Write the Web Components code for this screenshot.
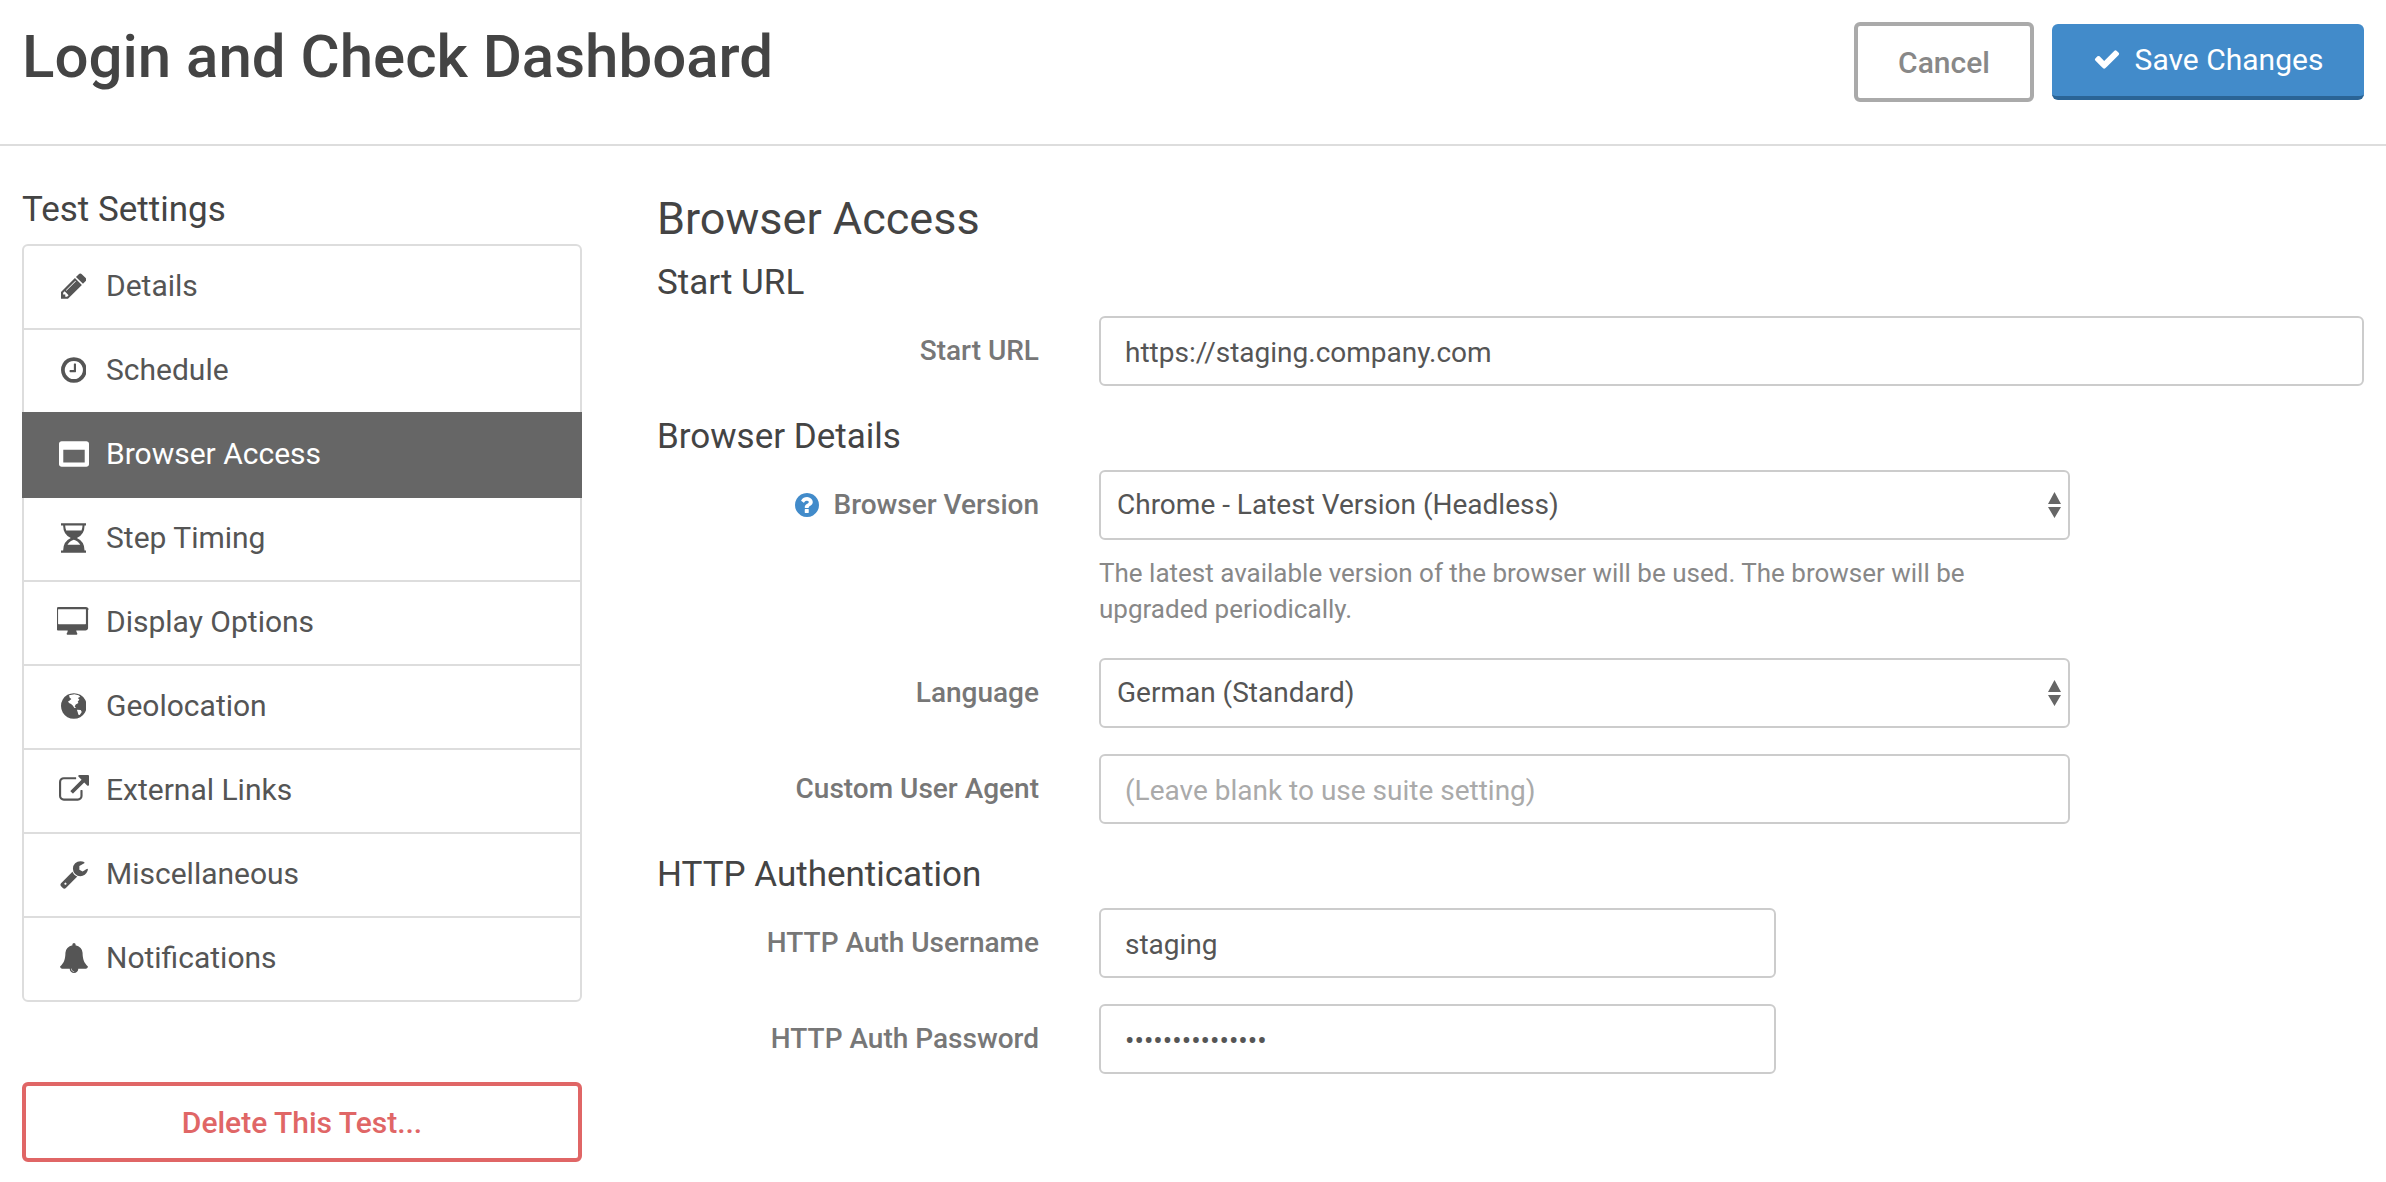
<!DOCTYPE html>
<html><head><meta charset="utf-8"><style>
html,body{margin:0;background:#fff;font-family:Roboto,"Liberation Sans",sans-serif;color:#444}
</style></head><body>
<app-page>
  <page-header slot="header" title-text="Login and Check Dashboard">
    <ui-button kind="cancel">Cancel</ui-button>
    <ui-button kind="save" icon="check">Save Changes</ui-button>
  </page-header>
  <settings-nav slot="nav">
    <nav-item icon="pencil">Details</nav-item>
    <nav-item icon="clock">Schedule</nav-item>
    <nav-item icon="window" active>Browser Access</nav-item>
    <nav-item icon="hourglass">Step Timing</nav-item>
    <nav-item icon="desktop">Display Options</nav-item>
    <nav-item icon="globe">Geolocation</nav-item>
    <nav-item icon="external">External Links</nav-item>
    <nav-item icon="wrench">Miscellaneous</nav-item>
    <nav-item icon="bell" last>Notifications</nav-item>
  </settings-nav>
  <section-title level="1">Browser Access</section-title>
  <section-title level="2" style="margin-top:14px">Start URL</section-title>
  <form-row label="Start URL" width="1265" style="margin-top:11px"><field-box kind="input">https://staging.company.com</field-box></form-row>
  <section-title level="2" style="margin-top:29px">Browser Details</section-title>
  <form-row label="Browser Version" help width="971" style="margin-top:11px">
    <field-box kind="select">Chrome - Latest Version (Headless)</field-box>
    <help-text slot="help">The latest available version of the browser will be used. The browser will be upgraded periodically.</help-text>
  </form-row>
  <form-row label="Language" width="971" style="margin-top:31px"><field-box kind="select">German (Standard)</field-box></form-row>
  <form-row label="Custom User Agent" width="971" style="margin-top:26px"><field-box kind="input" placeholder>(Leave blank to use suite setting)</field-box></form-row>
  <section-title level="2" style="margin-top:29px">HTTP Authentication</section-title>
  <form-row label="HTTP Auth Username" width="677" style="margin-top:11px"><field-box kind="input">staging</field-box></form-row>
  <form-row label="HTTP Auth Password" width="677" style="margin-top:26px"><field-box kind="input" password>•••••••••••••••</field-box></form-row>
</app-page>
<script>
const ICONS={
 check:['0 0 1792 1792','M1671 566q0 40-28 68l-724 724-136 136q-28 28-68 28t-68-28l-136-136-362-362q-28-28-28-68t28-68l136-136q28-28 68-28t68 28l294 295 656-657q28-28 68-28t68 28l136 136q28 28 28 68z'],
 question:['0 0 1536 1792','M880 1376v-192q0-14-9-23t-23-9h-192q-14 0-23 9t-9 23v192q0 14 9 23t23 9h192q14 0 23-9t9-23zm256-672q0-88-55.5-163t-138.5-116-170-41q-243 0-371 213-15 24 8 42l132 100q7 6 19 6 16 0 25-12 53-68 86-92 34-24 86-24 48 0 85.5 26t37.5 59q0 38-20 61t-68 45q-63 28-115.5 86.5t-52.5 125.5v36q0 14 9 23t23 9h192q14 0 23-9t9-23q0-19 21.5-49.5t54.5-49.5q32-18 49-28.5t46-35 44.5-48 28-60.5 12.5-81zm400 192q0 209-103 385.5t-279.5 279.5-385.5 103-385.5-103-279.5-279.5-103-385.5 103-385.5 279.5-279.5 385.5-103 385.5 103 279.5 279.5 103 385.5z'],
 pencil:['0 0 1536 1792','M363 1536l91-91-235-235-91 91v107h128v128h107zm523-928q0-22-22-22-10 0-17 7l-542 542q-7 7-7 17 0 22 22 22 10 0 17-7l542-542q7-7 7-17zm-54-192l416 416-832 832h-416v-416zm683 96q0 53-37 90l-166 166-416-416 166-165q36-38 90-38 53 0 91 38l235 234q37 39 37 91z'],
 clock:['0 0 1536 1792','M896 544v448q0 14-9 23t-23 9h-320q-14 0-23-9t-9-23v-64q0-14 9-23t23-9h224v-352q0-14 9-23t23-9h64q14 0 23 9t9 23zm416 352q0-148-73-273t-198-198-273-73-273 73-198 198-73 273 73 273 198 198 273 73 273-73 198-198 73-273zm224 0q0 209-103 385.5t-279.5 279.5-385.5 103-385.5-103-279.5-279.5-103-385.5 103-385.5 279.5-279.5 385.5-103 385.5 103 279.5 279.5 103 385.5z'],
 window:['0 0 1792 1792','M256 1408h1280v-768h-1280v768zm1536-1120v1216q0 66-47 113t-113 47h-1472q-66 0-113-47t-47-113v-1216q0-66 47-113t113-47h1472q66 0 113 47t47 113z'],
 hourglass:['0 0 1536 1792','M0 10H1536V150H1408Q1408 690 950 896Q1408 1102 1408 1642H1536V1782H0V1642H128Q128 1102 586 896Q128 690 128 150H0ZM250 150Q256 300 310 450H1226Q1280 300 1286 150ZM768 1000Q1010 1060 1150 1300H386Q526 1060 768 1000Z'],
 desktop:['0 0 1920 1792','M1728 992v-832q0-13-9.5-22.5t-22.5-9.5h-1600q-13 0-22.5 9.5t-9.5 22.5v832q0 13 9.5 22.5t22.5 9.5h1600q13 0 22.5-9.5t9.5-22.5zm128-832v1088q0 66-47 113t-113 47h-544q0 37 16 77.5t32 71 16 43.5q0 26-19 45t-45 19h-512q-26 0-45-19t-19-45q0-14 16-44t32-70 16-78h-544q-66 0-113-47t-47-113v-1088q0-66 47-113t113-47h1632q66 0 113 47t47 113z'],
 globe:['0 0 1536 1792','M768 128a768 768 0 1 0 0.01 0ZM480 260L800 190L1050 260L1150 340L1010 420L1100 520L1000 620L1040 720L880 800L820 920L900 1000L800 1010L700 860L600 770L480 720L420 620L520 560L620 480L520 400ZM950 1120L1180 1130L1240 1250L1120 1430L1040 1420L1000 1270Z'],
 external:['0 0 1792 1792','M1408 928v320q0 119-84.5 203.5t-203.5 84.5h-832q-119 0-203.5-84.5t-84.5-203.5v-832q0-119 84.5-203.5t203.5-84.5h704q14 0 23 9t9 23v64q0 14-9 23t-23 9h-704q-66 0-113 47t-47 113v832q0 66 47 113t113 47h832q66 0 113-47t47-113v-320q0-14 9-23t23-9h64q14 0 23 9t9 23zm384-864v512q0 26-19 45t-45 19-45-19l-176-176-652 652q-10 10-23 10t-23-10l-114-114q-10-10-10-23t10-23l652-652-176-176q-19-19-19-45t19-45 45-19h512q26 0 45 19t19 45z'],
 wrench:['0 0 1792 1792','M448 1472q0-26-19-45t-45-19-45 19-19 45 19 45 45 19 45-19 19-45zm644-420l-682 682q-37 37-90 37-52 0-91-37l-106-108q-38-36-38-90 0-53 38-91l681-681q39 98 114.5 173.5t173.5 114.5zm634-435q0 39-23 106-47 134-164.5 217.5t-258.5 83.5q-185 0-316.5-131.5t-131.5-316.5 131.5-316.5 316.5-131.5q58 0 121.5 16.5t107.5 46.5q16 11 16 28t-16 28l-293 169v224l193 107q5-3 79-48.5t135.5-81 70.5-35.5q15 0 23.5 10t8.5 25z'],
 bell:['0 0 1792 1792','M912 1696q0-16-16-16-59 0-101.5-42.5t-42.5-101.5q0-16-16-16t-16 16q0 73 51.5 124.5t124.5 51.5q16 0 16-16zm816-288q0 52-38 90t-90 38h-448q0 106-75 181t-181 75-181-75-75-181h-448q-52 0-90-38t-38-90q50-42 91-88t85-119.5 74.5-158.5 50-206 19.5-260q0-152 117-282.5t307-158.5q-8-19-8-39 0-40 28-68t68-28 68 28 28 68q0 20-8 39 190 28 307 158.5t117 282.5q0 139 19.5 260t50 206 74.5 158.5 85 119.5 91 88z']
};
function svg(name,h){const [vb,d]=ICONS[name];const p=vb.split(' ');const w=h*p[2]/p[3];
 return `<svg part="icon" width="${w}" height="${h}" viewBox="${vb}" fill="currentColor" fill-rule="evenodd" aria-hidden="true"><path d="${d}"/></svg>`;}
function def(tag,html){customElements.define(tag,class extends HTMLElement{
  constructor(){super();this.attachShadow({mode:'open'});}
  connectedCallback(){this.shadowRoot.innerHTML=typeof html==='function'?html(this):html;}
});}
def('app-page',`<style>:host{display:block;width:2386px;height:1182px;overflow:hidden;box-sizing:border-box}
.body{display:grid;grid-template-columns:560px 1fr;column-gap:75px;padding:0 22px}
.main{padding-top:45px;display:block}
.side{padding-top:42px}
</style><slot name="header"></slot><div class="body"><div class="side"><slot name="nav"></slot></div><div class="main"><slot></slot></div></div>`);
def('page-header',h=>`<style>:host{display:flex;height:144px;border-bottom:2px solid #ddd;padding:0 22px;justify-content:space-between;align-items:flex-start}
h1{margin:0;padding-top:21px;font:500 60px/72px Roboto,sans-serif;color:#444;letter-spacing:0}
.b{display:flex;gap:18px;padding-top:22px;align-items:center}</style><h1>${h.getAttribute('title-text')}</h1><div class="b"><slot></slot></div>`);
def('ui-button',h=>{const k=h.getAttribute('kind');const ic=h.getAttribute('icon');
 const s={cancel:`width:180px;height:80px;border:4px solid #aaa;color:#888;font-weight:500;padding-bottom:0`,
  save:`width:312px;height:76px;background:#428bca;border-bottom:4px solid #2a6496;color:#fff;font-weight:400;gap:14px;padding-bottom:2px`,
  danger:`width:560px;height:80px;border:4px solid #e06666;color:#e06666;font-weight:500`}[k];
 return `<style>:host{display:block}.btn{box-sizing:border-box;display:flex;align-items:center;justify-content:center;border-radius:6px;font-family:Roboto,sans-serif;font-size:30px;${s}}</style><div class="btn">${ic?svg(ic,28):''}<slot></slot></div>`;});
def('settings-nav',`<style>:host{display:block;width:560px;font-family:Roboto,sans-serif}
h3{margin:0 0 12px;font:400 35px/44px Roboto,sans-serif;color:#444}
.list{border:2px solid #ddd;border-radius:6px}
.del{margin-top:80px}</style><h3>Test Settings</h3><div class="list"><slot></slot></div><div class="del"><ui-button kind="danger">Delete This Test...</ui-button></div>`);
def('nav-item',h=>{const a=h.hasAttribute('active');const last=h.hasAttribute('last');
 return `<style>:host{display:flex;box-sizing:border-box;height:${last?82:84}px;align-items:center;padding-left:32px;padding-bottom:2px;border-bottom:${last?0:2}px solid #ddd;color:#555;font:400 30px/36px Roboto,sans-serif;${a?'background:#666;color:#fff;margin:-2px -2px 0;height:86px;width:auto;padding-left:34px;border-bottom:0;':''}}
.i{width:35px;margin-right:15px;display:flex;justify-content:center;align-items:center;flex:none}</style><span class="i">${svg(h.getAttribute('icon'),30)}</span><slot></slot>`;});
def('section-title',h=>{const l=h.getAttribute('level');return `<style>:host{display:block;color:#444;font-family:Roboto,sans-serif;font-weight:400;${l==1?'font-size:45px;line-height:56px':'font-size:35px;line-height:44px'}}</style><slot></slot>`});
def('form-row',h=>{const w=h.getAttribute('width');return `<style>:host{display:grid;grid-template-columns:382px ${w}px;column-gap:60px;align-items:start}
.l{height:70px;display:flex;align-items:center;justify-content:flex-end;gap:14px;color:#777;font:500 28px/36px Roboto,sans-serif;box-sizing:border-box}
.l svg{color:#428bca}
</style><div class="l">${h.hasAttribute('help')?svg('question',28):''}<span>${h.getAttribute('label')}</span></div><div><slot></slot><slot name="help"></slot></div>`});
def('help-text',`<style>:host{display:block;width:900px;margin-top:15px;color:#888;font:400 26px/36px Roboto,sans-serif}</style><slot></slot>`);
def('field-box',h=>{const sel=h.getAttribute('kind')==='select';const ph=h.hasAttribute('placeholder');
 return `<style>:host{display:flex;box-sizing:border-box;height:70px;align-items:center;border:2px solid #ccc;border-radius:6px;background:#fff;padding:${sel?0:3}px ${sel?16:24}px 0;color:${ph?'#aaa':'#555'};font:400 28px/36px Roboto,sans-serif;justify-content:space-between}
svg{flex:none;margin-right:-9px;display:block}</style><span><slot></slot></span>${sel?'<svg width="13" height="26" viewBox="0 0 13 26" fill="#666"><path d="M6.5 0L13 12H0ZM0 15H13L6.5 26Z"/></svg>':''}`});
</script>
</body></html>
